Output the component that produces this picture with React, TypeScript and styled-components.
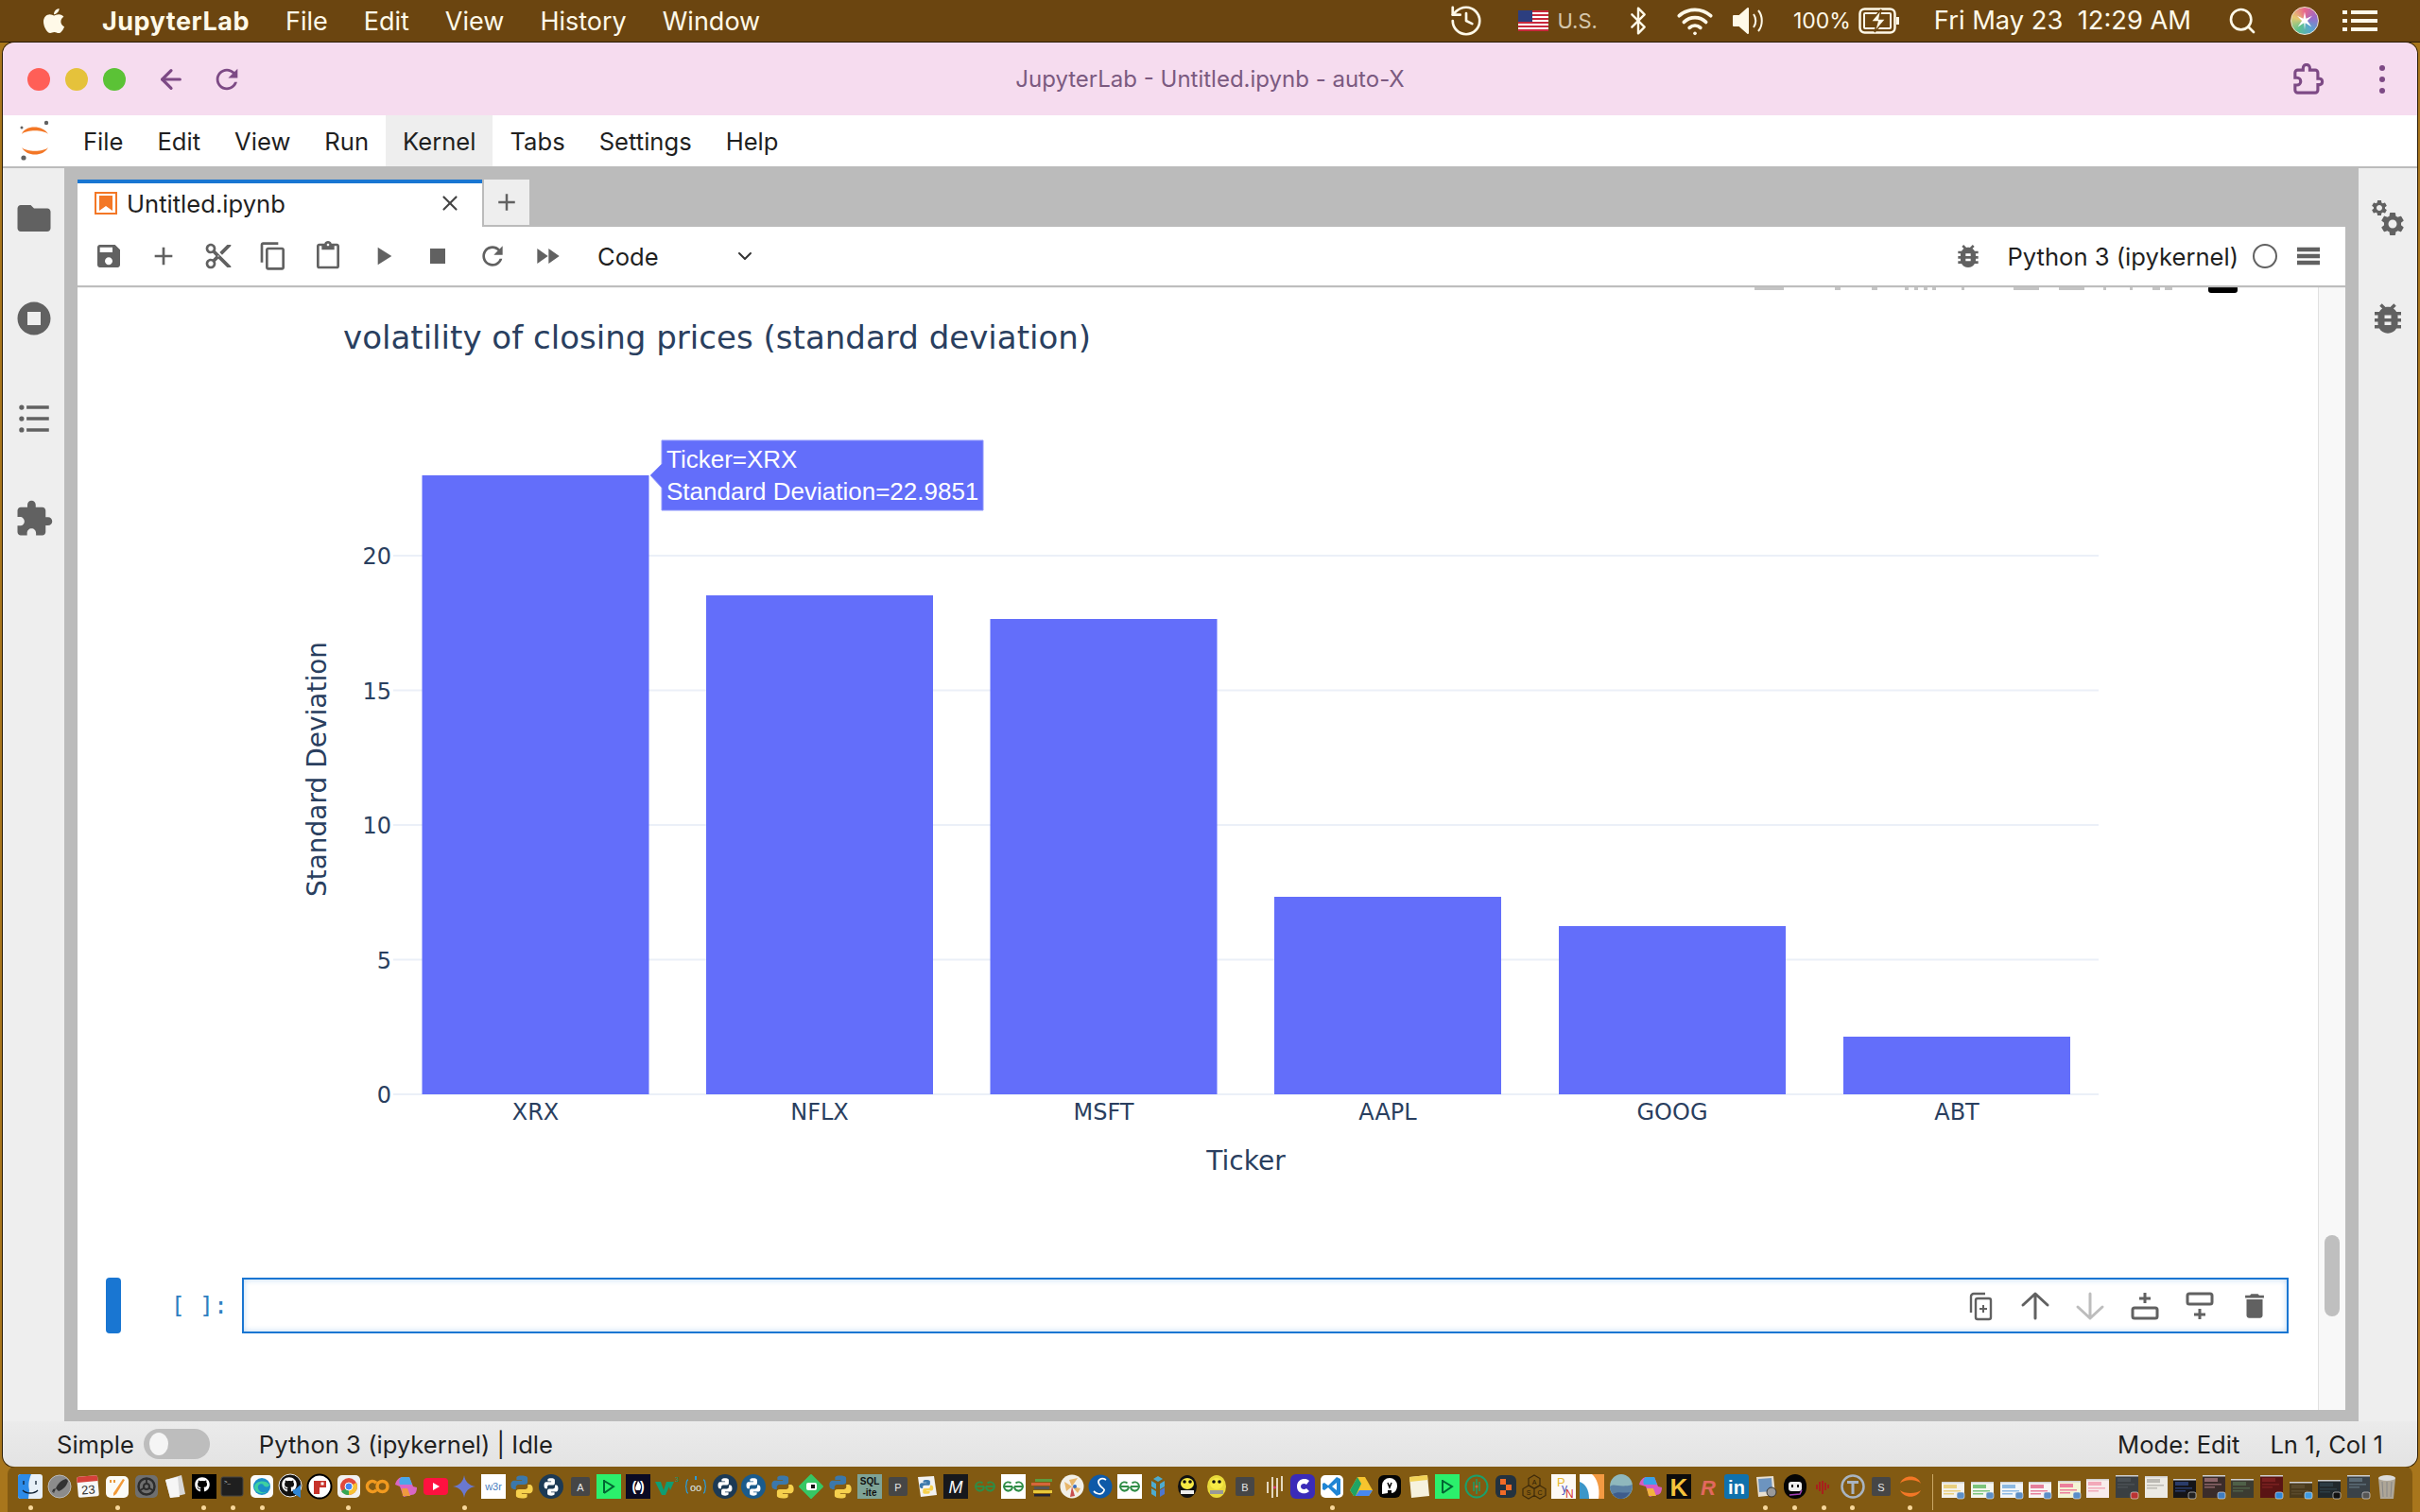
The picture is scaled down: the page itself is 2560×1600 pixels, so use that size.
import React, { ReactNode } from "react";
import styled, { createGlobalStyle } from "styled-components";
import { FaApple, FaGithub } from "react-icons/fa";
import { ArrowLeft, Bluetooth, ChevronDown, History, Search, Wifi, X } from "lucide-react";

const UI_FONT = `Inter, "Liberation Sans", sans-serif`;
const PLOT_FONT = `"DejaVu Sans", Verdana, sans-serif`;
const SANS = `"Liberation Sans", Arial, sans-serif`;

const PATHS = {
  save: "M17 3H5c-1.11 0-2 .9-2 2v14c0 1.1.89 2 2 2h14c1.1 0 2-.9 2-2V7l-4-4zm-5 16c-1.66 0-3-1.34-3-3s1.34-3 3-3 3 1.34 3 3-1.34 3-3 3zm3-10H5V5h10v4z",
  add: "M19 13h-6v6h-2v-6H5v-2h6V5h2v6h6v2z",
  cut: "M9.64 7.64c.23-.5.36-1.05.36-1.64 0-2.21-1.79-4-4-4S2 3.79 2 6s1.79 4 4 4c.59 0 1.14-.13 1.64-.36L10 12l-2.36 2.36C7.14 14.13 6.59 14 6 14c-2.21 0-4 1.79-4 4s1.79 4 4 4 4-1.79 4-4c0-.59-.13-1.14-.36-1.64L12 14l7 7h3v-1L9.64 7.64zM6 8c-1.1 0-2-.89-2-2s.9-2 2-2 2 .89 2 2-.9 2-2 2zm0 12c-1.1 0-2-.89-2-2s.9-2 2-2 2 .89 2 2-.9 2-2 2zm6-7.5c-.28 0-.5-.22-.5-.5s.22-.5.5-.5.5.22.5.5-.22.5-.5.5zM19 3l-6 6 2 2 7-7V3h-3z",
  copy: "M16 1H4c-1.1 0-2 .9-2 2v14h2V3h12V1zm3 4H8c-1.1 0-2 .9-2 2v14c0 1.1.9 2 2 2h11c1.1 0 2-.9 2-2V7c0-1.1-.9-2-2-2zm0 16H8V7h11v14z",
  paste: "M19 2h-4.18C14.4.84 13.3 0 12 0c-1.3 0-2.4.84-2.82 2H5c-1.1 0-2 .9-2 2v16c0 1.1.9 2 2 2h14c1.1 0 2-.9 2-2V4c0-1.1-.9-2-2-2zm-7 0c.55 0 1 .45 1 1s-.45 1-1 1-1-.45-1-1 .45-1 1-1zm7 18H5V4h2v3h10V4h2v16z",
  run: "M8 5v14l11-7z",
  stop: "M6 6h12v12H6z",
  refresh: "M17.65 6.35C16.2 4.9 14.21 4 12 4c-4.42 0-7.99 3.58-7.99 8s3.57 8 7.99 8c3.73 0 6.84-2.55 7.73-6h-2.08c-.82 2.33-3.04 4-5.65 4-3.31 0-6-2.69-6-6s2.69-6 6-6c1.66 0 3.14.69 4.22 1.78L13 11h7V4l-2.35 2.35z",
  forward: "M4 18l8.5-6L4 6v12zm9-12v12l8.5-6L13 6z",
  bug: "M20 8h-2.81c-.45-.78-1.07-1.45-1.82-1.96L17 4.41 15.59 3l-2.17 2.17C12.96 5.06 12.49 5 12 5c-.49 0-.96.06-1.41.17L8.41 3 7 4.41l1.62 1.63C7.88 6.55 7.26 7.22 6.81 8H4v2h2.09c-.05.33-.09.66-.09 1v1H4v2h2v1c0 .34.04.67.09 1H4v2h2.81c1.04 1.79 2.97 3 5.19 3s4.15-1.21 5.19-3H20v-2h-2.09c.05-.33.09-.66.09-1v-1h2v-2h-2v-1c0-.34-.04-.67-.09-1H20V8zm-6 8h-4v-2h4v2zm0-4h-4v-2h4v2z",
  menu: "M3 5h18v3.4H3zM3 10.3h18v3.4H3zM3 15.6h18V19H3z",
  folder: "M10 4H4c-1.1 0-1.99.9-1.99 2L2 18c0 1.1.9 2 2 2h16c1.1 0 2-.9 2-2V8c0-1.1-.9-2-2-2h-8l-2-2z",
  running: "M12 2C6.48 2 2 6.48 2 12s4.48 10 10 10 10-4.48 10-10S17.52 2 12 2zm4 14H8V8h8v8z",
  list: "M3 5.2a1.5 1.5 0 1 1 3 0 1.500 1.500 0 0 1-3 0zM7.5 4.2H21v2H7.5zM3 12a1.5 1.5 0 1 1 3 0 1.500 1.500 0 0 1-3 0zM7.5 11H21v2H7.5zM3 18.800a1.5 1.5 0 1 1 3 0 1.500 1.500 0 0 1-3 0zM7.5 17.800H21v2H7.5z",
  extension: "M20.5 11H19V7c0-1.1-.9-2-2-2h-4V3.5C13 2.12 11.88 1 10.5 1S8 2.12 8 3.5V5H4c-1.1 0-1.99.9-1.99 2v3.8H3.5c1.49 0 2.7 1.21 2.7 2.7s-1.21 2.7-2.7 2.7H2V20c0 1.1.9 2 2 2h3.8v-1.5c0-1.49 1.21-2.7 2.7-2.7 1.49 0 2.7 1.21 2.7 2.7V22H17c1.1 0 2-.9 2-2v-4h1.5c1.38 0 2.5-1.12 2.5-2.5S21.88 11 20.5 11z",
  gear: "M19.14 12.94c.04-.3.06-.61.06-.94 0-.32-.02-.64-.07-.94l2.03-1.58c.18-.14.23-.41.12-.61l-1.92-3.32c-.12-.22-.37-.29-.59-.22l-2.39.96c-.5-.38-1.03-.7-1.62-.94l-.36-2.54c-.04-.24-.24-.41-.48-.41h-3.84c-.24 0-.43.17-.47.41l-.36 2.54c-.59.24-1.13.57-1.62.94l-2.39-.96c-.22-.08-.47 0-.59.22L2.74 8.87c-.12.21-.08.47.12.61l2.03 1.58c-.05.3-.09.63-.09.94s.02.64.07.94l-2.03 1.58c-.18.14-.23.41-.12.61l1.92 3.32c.12.22.37.29.59.22l2.39-.96c.5.38 1.03.7 1.62.94l.36 2.54c.05.24.24.41.48.41h3.84c.24 0 .44-.17.47-.41l.36-2.54c.59-.24 1.13-.56 1.62-.94l2.39.96c.22.08.47 0 .59-.22l1.92-3.32c.12-.22.07-.47-.12-.61l-2.01-1.58zM12 15.6c-1.98 0-3.6-1.62-3.6-3.6s1.62-3.6 3.6-3.6 3.6 1.62 3.6 3.6-1.62 3.6-3.6 3.6z",
  trash: "M6 19c0 1.1.9 2 2 2h8c1.1 0 2-.9 2-2V7H6v12zM19 4h-3.5l-1-1h-5l-1 1H5v2h14V4z",
};

const GlobalStyle = createGlobalStyle`
  html, body { margin: 0; padding: 0; width: 2560px; height: 1600px; overflow: hidden; }
  body { font-family: ${UI_FONT}; }
`;

const Page = styled.div`
  width: 2560px;
  height: 1600px;
  display: flex;
  flex-direction: column;
  background: #a8761c;
`;

/* mac menu bar */
const MacBar = styled.header`
  height: 44px;
  flex: none;
  display: flex;
  align-items: center;
  padding: 0 45px 0 42px;
  background: #6b4510;
  color: #fff9e8;
  font-size: 27px;
  border-bottom: 1px solid #2e1e07;
`;
const MacMenuItem = styled.span<{ $bold?: boolean; $left: number }>`
  margin-left: ${(p) => p.$left}px;
  font-weight: ${(p) => (p.$bold ? 700 : 400)};
  letter-spacing: ${(p) => (p.$bold ? 0.5 : 0)}px;
  line-height: 1;
`;
const MacSlot = styled.span<{ $left?: number; $auto?: boolean; $dim?: boolean; $size?: number }>`
  display: flex;
  align-items: center;
  margin-left: ${(p) => (p.$auto ? "auto" : `${p.$left}px`)};
  opacity: ${(p) => (p.$dim ? 0.72 : 1)};
  font-size: ${(p) => p.$size ?? 27}px;
  line-height: 1;
`;
const SiriDisc = styled.span`
  width: 30px;
  height: 30px;
  box-sizing: border-box;
  border: 1px solid #efe3d2;
  border-radius: 50%;
  display: flex;
  align-items: center;
  justify-content: center;
  background: conic-gradient(#e8668c, #9a6ac8, #58a6cf, #5ec28e, #e6c96f, #e8668c);
`;

/* browser window */
const Window = styled.main`
  flex: none;
  height: 1507px;
  margin: 0 3px;
  display: flex;
  flex-direction: column;
  border-radius: 12px;
  overflow: hidden;
  box-shadow: 0 0 0 1px #2a1c06;
`;
const TitleBar = styled.div`
  height: 77px;
  flex: none;
  display: grid;
  grid-template-columns: 1fr auto 1fr;
  align-items: center;
  background: #f6dcef;
  color: #7d4a85;
`;
const TitleLeft = styled.div`
  display: flex;
  align-items: center;
  padding-left: 26px;
`;
const Traffic = styled.span<{ $color: string }>`
  width: 24px;
  height: 24px;
  border-radius: 50%;
  background: ${(p) => p.$color};
  margin-right: 16px;
`;
const NavButton = styled.span<{ $left: number }>`
  display: flex;
  margin-left: ${(p) => p.$left}px;
`;
const TitleText = styled.div`
  font-size: 24px;
  color: #7b5a80;
`;
const TitleRight = styled.div`
  display: flex;
  align-items: center;
  justify-content: flex-end;
  padding-right: 19px;
  gap: 43px;
`;
const ChromeDots = styled.span`
  display: flex;
  flex-direction: column;
  gap: 6px;
  width: 36px;
  align-items: center;
`;
const ChromeDot = styled.i`
  width: 6px;
  height: 6px;
  border-radius: 50%;
  background: #7d4a85;
`;

const AppMenu = styled.nav`
  height: 54px;
  flex: none;
  display: flex;
  align-items: stretch;
  background: #fff;
  padding-left: 17px;
`;
const LogoBox = styled.div`
  width: 50px;
  display: flex;
  align-items: center;
`;
const AppMenuItem = styled.div<{ $active?: boolean }>`
  display: flex;
  align-items: center;
  padding: 0 18px;
  font-size: 25.6px;
  color: #1f1f1f;
  background: ${(p) => (p.$active ? "#eeeeee" : "transparent")};
`;

const Main = styled.div`
  flex: 1;
  min-height: 0;
  display: flex;
  background: #bbbbbb;
`;
const Rail = styled.aside<{ $width: number }>`
  width: ${(p) => p.$width}px;
  flex: none;
  margin-top: 2px;
  background: #eeeeee;
  display: flex;
  flex-direction: column;
  align-items: center;
  padding-top: 32px;
  gap: 64px;
`;
const Glyph = styled.svg<{ $size: number; $color?: string }>`
  width: ${(p) => p.$size}px;
  height: ${(p) => p.$size}px;
  flex: none;
  display: block;
  fill: ${(p) => p.$color ?? "#616161"};
`;
const GearPair = styled.div`
  width: 42px;
  height: 42px;
  position: relative;
`;
const SmallGear = styled(Glyph)`
  position: absolute;
  top: 0;
  left: 2px;
`;
const BigGear = styled(Glyph)`
  position: absolute;
  right: 1px;
  bottom: 0;
`;

const Center = styled.div`
  flex: 1;
  min-width: 0;
  display: flex;
  flex-direction: column;
  padding: 14px 14px 12px;
`;
const TabBar = styled.div`
  height: 50px;
  flex: none;
  display: flex;
  align-items: flex-start;
`;
const ActiveTab = styled.div`
  width: 428px;
  height: 50px;
  box-sizing: border-box;
  background: #fff;
  border-top: 4px solid #1976d2;
  display: flex;
  align-items: center;
  padding: 0 21px 4px 18px;
  font-size: 25.6px;
  color: #1f1f1f;
`;
const TabLabel = styled.span`
  margin-left: 10px;
  flex: 1;
`;
const NewTab = styled.div`
  width: 48px;
  height: 48px;
  margin-left: 2px;
  background: #eeeeee;
  display: flex;
  align-items: center;
  justify-content: center;
`;

const Toolbar = styled.div`
  height: 62px;
  flex: none;
  position: relative;
  z-index: 1;
  display: flex;
  align-items: center;
  background: #fff;
  padding: 0 23px 0 4px;
  box-shadow: 0 2px 1px #bdbdbd;
`;
const ToolButton = styled.span`
  width: 58px;
  display: flex;
  justify-content: center;
  align-items: center;
`;
const CellType = styled.span`
  width: 144px;
  margin-left: 24px;
  font-size: 25.6px;
  color: #1f1f1f;
`;
const KernelArea = styled.div`
  margin-left: auto;
  display: flex;
  align-items: center;
`;
const KernelName = styled.span`
  font-size: 25.6px;
  color: #1f1f1f;
  margin-left: 25px;
`;
const KernelCircle = styled.span`
  width: 26px;
  height: 26px;
  box-sizing: border-box;
  border: 2px solid #616161;
  border-radius: 50%;
  margin: 0 17px 0 15px;
`;

const Content = styled.section`
  flex: 1;
  min-height: 0;
  display: flex;
  background: #fff;
`;
const NotebookColumn = styled.div`
  flex: 1;
  min-width: 0;
  overflow: hidden;
`;
const PlotSvg = styled.svg`
  display: block;
  width: 2369px;
  height: 1050px;
`;
const CellRow = styled.div`
  display: flex;
  height: 59px;
  padding-left: 30px;
  padding-right: 31px;
`;
const Collapser = styled.div`
  width: 16px;
  border-radius: 4px;
  background: #1976d2;
`;
const Prompt = styled.div`
  width: 113px;
  padding-right: 15px;
  text-align: right;
  font-family: "DejaVu Sans Mono", monospace;
  font-size: 25px;
  line-height: 59px;
  color: #307fc1;
  white-space: pre;
`;
const CellInput = styled.div`
  flex: 1;
  box-sizing: border-box;
  border: 2px solid #1976d2;
  box-shadow: inset 0 0 6px rgba(25, 118, 210, 0.3);
  background: #fff;
  display: flex;
  align-items: center;
  justify-content: flex-end;
  padding-right: 5px;
`;
const Scrollbar = styled.div`
  width: 29px;
  flex: none;
  box-sizing: border-box;
  background: #f8f8f8;
  border-left: 1px solid #e0e0e0;
  padding: 1005px 0 0 6px;
`;
const ScrollThumb = styled.div`
  width: 16px;
  height: 86px;
  background: #bfbfbf;
  border-radius: 8px;
`;

const StatusBar = styled.footer`
  height: 48px;
  flex: none;
  display: flex;
  align-items: center;
  padding: 0 36px 0 57px;
  background: linear-gradient(#ebebeb, #e3e3e3);
  font-size: 25.6px;
  color: #1f1f1f;
`;
const Toggle = styled.span`
  width: 70px;
  height: 32px;
  margin-left: 10px;
  border-radius: 16px;
  background: #bdbdbd;
  display: flex;
  align-items: center;
  padding-left: 6px;
  box-sizing: border-box;
`;
const ToggleKnob = styled.i`
  width: 20px;
  height: 24px;
  border-radius: 50%;
  background: #f5f5f5;
`;
const StatusKernel = styled.span`
  margin-left: 52px;
`;
const StatusRight = styled.span<{ $auto?: boolean }>`
  margin-left: ${(p) => (p.$auto ? "auto" : "32px")};
`;

/* dock */
const Dock = styled.nav`
  flex: 1;
  margin: 0 8px;
  display: flex;
  align-items: flex-start;
  background: #825a12;
  padding: 8px 0 0 9px;
  border-radius: 8px 8px 0 0;
`;
const DockItem = styled.div`
  width: 30.6px;
  flex: none;
  display: flex;
  flex-direction: column;
  align-items: center;
`;
const DockArt = styled.svg`
  width: 26px;
  height: 26px;
  display: block;
  overflow: visible;
`;
const DockDot = styled.i<{ $on?: boolean }>`
  width: 5px;
  height: 5px;
  margin-top: 7px;
  border-radius: 50%;
  background: ${(p) => (p.$on ? "#f7d79a" : "transparent")};
`;
const DockSep = styled.div`
  width: 1px;
  height: 38px;
  margin: 0 6px 0 8px;
  background: #c9a765;
`;

const Icon = ({ d, size = 32, color }: { d: string; size?: number; color?: string }) => (
  <Glyph viewBox="0 0 24 24" $size={size} $color={color}>
    <path d={d} />
  </Glyph>
);

const JupyterLogo = () => (
  <svg width="34" height="44" viewBox="0 0 34 44">
    <path d="M3 15C6 5 26 5 31 15C26 10 8 10 3 15Z" fill="#f37726" />
    <path d="M3 29C8 39 26 39 31 29C26 34 8 34 3 29Z" fill="#f37726" />
    <circle cx="29" cy="3" r="2.2" fill="#616161" />
    <circle cx="3" cy="8" r="1.5" fill="#616161" />
    <circle cx="5" cy="40" r="2.6" fill="#616161" />
  </svg>
);

const NotebookGlyph = () => (
  <svg width="24" height="24" viewBox="0 0 24 24">
    <rect x="1" y="1" width="22" height="22" fill="#fff" stroke="#f37726" strokeWidth="2" />
    <path d="M5 4h14v16l-7-5-7 5z" fill="#f37726" />
  </svg>
);

const CellCopyIcon = () => (
  <svg width="32" height="32" viewBox="0 0 32 32" fill="none" stroke="#616161" strokeWidth="2.4">
    <path d="M21 3H9a3 3 0 0 0-3 3v17" />
    <rect x="11" y="8" width="16" height="22" rx="2" />
    <path d="M19 15v8M15 19h8" strokeWidth="2" />
  </svg>
);

const MoveIcon = ({ down }: { down?: boolean }) => (
  <svg width="32" height="32" viewBox="0 0 32 32" fill="none" stroke={down ? "#bdbdbd" : "#616161"} strokeWidth="3" strokeLinecap="round" strokeLinejoin="round">
    <path d={down ? "M3 17L16 29L29 17M16 29V3" : "M3 15L16 3L29 15M16 3V29"} />
  </svg>
);

const InsertIcon = ({ below }: { below?: boolean }) => (
  <svg width="32" height="32" viewBox="0 0 32 32" fill="none" stroke="#616161" strokeWidth="3">
    {below ? (
      <>
        <rect x="3" y="3" width="26" height="11" rx="2" />
        <path d="M16 19v11M10 25h12" />
      </>
    ) : (
      <>
        <rect x="3" y="18" width="26" height="11" rx="2" />
        <path d="M16 2v11M10 8h12" />
      </>
    )}
  </svg>
);

const FlagIcon = () => (
  <svg width="32" height="22" viewBox="0 0 32 22">
    <rect width="32" height="22" fill="#fff" />
    {[0, 4, 8, 12, 16, 20].map((y) => (
      <rect key={y} y={y} width="32" height="2" fill="#c8283c" />
    ))}
    <rect width="15" height="12" fill="#2c3e7f" />
  </svg>
);

const VolumeIcon = () => (
  <svg width="36" height="32" viewBox="0 0 36 32" fill="none" stroke="#fff9e8" strokeWidth="2">
    <path d="M2 11h6l9-8v26l-9-8H2z" fill="#fff9e8" strokeLinejoin="round" />
    <path d="M23 9c3 4 3 10 0 14M28 5c5 6 5 16 0 22" />
  </svg>
);

const BatteryIcon = () => (
  <svg width="44" height="30" viewBox="0 0 44 30" fill="none" stroke="#fff9e8" strokeWidth="2.5">
    <rect x="1.5" y="2.5" width="37" height="25" rx="5" />
    <rect x="6" y="7" width="28" height="16" rx="1" strokeWidth="2" />
    <path d="M41.5 11v8" strokeWidth="3" />
    <path d="M24 3l-11 13h7l-3 11 12-14h-7z" fill="#fff9e8" stroke="#6b4510" strokeWidth="1.5" />
  </svg>
);

const MacListIcon = () => (
  <svg width="37" height="22" viewBox="0 0 37 22" fill="#fff9e8">
    {[0, 9, 18].map((y) => (
      <g key={y}>
        <rect y={y} width="5" height="4" />
        <rect x="9" y={y} width="28" height="4" />
      </g>
    ))}
  </svg>
);

const TICK_COLOR = "#2a3f5f";
const BARS = [
  { name: "XRX", x: 446.5, top: 503 },
  { name: "NFLX", x: 747, top: 630 },
  { name: "MSFT", x: 1047.5, top: 655 },
  { name: "AAPL", x: 1348, top: 949 },
  { name: "GOOG", x: 1649, top: 980 },
  { name: "ABT", x: 1950, top: 1097 },
];
const Y_TICKS = [
  { label: "0", y: 1158 },
  { label: "5", y: 1015.5 },
  { label: "10", y: 873 },
  { label: "15", y: 730.5 },
  { label: "20", y: 588 },
];
const MODEBAR: [number, number][] = [
  [1856, 31], [1941, 6], [1980, 6], [2015, 4], [2025, 4], [2035, 4], [2044, 4], [2075, 3],
  [2130, 27], [2178, 27], [2225, 3], [2253, 3], [2277, 8], [2290, 8],
];

const Plot = () => (
  <PlotSvg viewBox="82 302 2369 1050">
    {MODEBAR.map(([x, w]) => (
      <rect key={x} x={x} y="302" width={w} height="5" fill="#c4c4c4" />
    ))}
    <rect x="2336" y="302" width="31" height="8" rx="3" fill="#000" />
    <text x="363" y="369" fontFamily={PLOT_FONT} fontSize="34.05" fill={TICK_COLOR}>
      volatility of closing prices (standard deviation)
    </text>
    {Y_TICKS.map((t) => (
      <g key={t.label}>
        <rect x="416" y={t.y - 1} width="1804" height="2" fill="#ebf0f8" />
        <text x="414" y={t.y + 9} textAnchor="end" fontFamily={PLOT_FONT} fontSize="24" fill={TICK_COLOR}>
          {t.label}
        </text>
      </g>
    ))}
    {BARS.map((b) => (
      <g key={b.name}>
        <rect x={b.x} y={b.top} width="240" height={1158 - b.top} fill="#636efa" />
        <text x={b.x + 120} y="1185" textAnchor="middle" fontFamily={PLOT_FONT} fontSize="24" fill={TICK_COLOR}>
          {b.name}
        </text>
      </g>
    ))}
    <text x="1318" y="1238" textAnchor="middle" fontFamily={PLOT_FONT} fontSize="28" fill={TICK_COLOR}>
      Ticker
    </text>
    <text
      transform="translate(345 814) rotate(-90)"
      textAnchor="middle"
      fontFamily={PLOT_FONT}
      fontSize="28"
      fill={TICK_COLOR}
    >
      Standard Deviation
    </text>
    <path d="M700 466H1040V540H700V516L688 503L700 491Z" fill="#636efa" stroke="#8f97fb" strokeWidth="1" />
    <text x="705" y="495" fontFamily={SANS} fontSize="26" fill="#fff">
      Ticker=XRX
    </text>
    <text x="705" y="529" fontFamily={SANS} fontSize="26" fill="#fff">
      Standard Deviation=22.9851
    </text>
  </PlotSvg>
);

/* small drawings for the dock */
const Tile = ({ bg, text, color = "#fff", size = 12, rx = 0, bold, y = 17 }: {
  bg: string; text?: string; color?: string; size?: number; rx?: number; bold?: boolean; y?: number;
}) => (
  <>
    <rect width="26" height="26" rx={rx} fill={bg} />
    {text && (
      <text x="13" y={y} textAnchor="middle" fontFamily={SANS} fontSize={size} fontWeight={bold ? 700 : 400} fill={color}>
        {text}
      </text>
    )}
  </>
);

const SNAKE = "M12.8 1.5C8 1.5 8.3 3.6 8.3 3.6V6h4.8v.8H6.5S3.3 6.4 3.3 11.3s2.8 4.7 2.8 4.7h1.700v-2.300s-.1-2.800 2.800-2.800h4.800s2.700 0 2.700-2.600V4.200s.4-2.700-5.300-2.700z";
const Python = () => (
  <g transform="translate(-2.6 0) scale(1.2 1)">
    <path d={SNAKE} fill="#3b78ab" />
    <g transform="rotate(180 13 13.5)"><path d={SNAKE} fill="#f6d04d" /></g>
  </g>
);
const PythonBadge = ({ bg }: { bg: string }) => (
  <>
    <circle cx="13" cy="13" r="13" fill={bg} />
    <g transform="translate(3 3) scale(.77)">
      <path d={SNAKE} fill="#fff" />
      <g transform="rotate(180 13 13.5)"><path d={SNAKE} fill="#fff" /></g>
    </g>
  </>
);
const GeeksMark = () => (
  <path
    d="M3 11h9M14 11h9M12 11a4.5 4.5 0 1 1-1.5-3.500M14 11a4.5 4.5 0 1 0 1.5-3.500M12 11a4.5 4.5 0 0 1-8 3M14 11a4.5 4.5 0 0 0 8 3"
    transform="translate(0 2)"
    fill="none"
    stroke="#2f8d46"
    strokeWidth="1.8"
  />
);
const DkMark = () => (
  <>
    <rect width="26" height="26" fill="#2bf06c" />
    <path d="M8 6v14M8 7l10 6-10 7" fill="none" stroke="#063" strokeWidth="2" />
  </>
);
const SquareLetter = ({ letter }: { letter: string }) => (
  <>
    <rect x="3" y="3" width="20" height="20" rx="2" fill="#464646" />
    <text x="13" y="18" textAnchor="middle" fontFamily={SANS} fontSize="11" fill="#e8e8e8">{letter}</text>
  </>
);
const Turtle = ({ dark }: { dark?: boolean }) => (
  <>
    <ellipse cx="13" cy="13" rx="10" ry="12" fill={dark ? "#111" : "#e8d93a"} />
    <ellipse cx="13" cy="10" rx="7" ry="6" fill="#f7ea45" />
    <circle cx="10" cy="8" r="1.8" fill="#111" />
    <circle cx="16" cy="8" r="1.8" fill="#111" />
    <rect x="6" y="17" width="14" height="4" fill={dark ? "#eee" : "#999"} />
  </>
);

const DOCK_ITEMS: { art: ReactNode; dot?: boolean }[] = [
  { dot: true, art: <>
    <rect width="26" height="26" rx="3" fill="#e8f0f8" />
    <path d="M0 3a3 3 0 0 1 3-3h11c-3 7-3 12-2 17l-1 9H3a3 3 0 0 1-3-3z" fill="#2d8be8" />
    <path d="M6 7v4M19 7v4M5 17c4 4 12 4 16 0" stroke="#123" strokeWidth="1.3" fill="none" />
  </> },
  { art: <>
    <circle cx="13" cy="13" r="12" fill="#8c8c8c" stroke="#bbb" />
    <path d="M20 5c-5 1-9 5-11 10l3 3c5-2 9-6 10-11zM9 15l-3 1-1 3 3-1zM6 20l2-1-1-1z" fill="#333" />
  </> },
  { art: <>
    <g transform="rotate(-5 13 13)">
      <rect x="2" y="2" width="22" height="22" rx="2" fill="#f7f7f7" />
      <path d="M2 8V4a2 2 0 0 1 2-2h18a2 2 0 0 1 2 2v4z" fill="#d5403a" />
      <text x="13" y="21" textAnchor="middle" fontFamily={SANS} fontSize="13" fill="#333">23</text>
    </g>
  </> },
  { dot: true, art: <>
    <rect x="1" y="2" width="24" height="23" rx="5" fill="#fbfbf6" />
    <path d="M19 5l2 1-9 15-3 2 0-3z" fill="#f29a38" />
    <path d="M5 6h2v3H5zM9 6h2v3H9z" fill="#e8983a" />
  </> },
  { art: <>
    <rect x="1" y="1" width="24" height="24" rx="5" fill="#6f6f6f" />
    <circle cx="13" cy="13" r="8.5" fill="none" stroke="#2c2c2c" strokeWidth="2.5" />
    <circle cx="13" cy="13" r="3" fill="none" stroke="#2c2c2c" strokeWidth="2" />
    <path d="M13 4.5V10M5.5 17.5l5-3M20.5 17.5l-5-3" stroke="#2c2c2c" strokeWidth="1.8" />
  </> },
  { art: <>
    <path d="M3 6l17-5 4 20-16 4z" fill="#d8d8d8" />
    <path d="M3 6l13-3 2 21-10 1z" fill="#f6f6f6" />
  </> },
  { dot: true, art: <>
    <rect width="26" height="26" fill="#000" />
    <FaGithub x="3" y="3" width="20" height="20" color="#fff" />
  </> },
  { dot: true, art: <>
    <rect x="1" y="3" width="23" height="20" rx="2" fill="#1f1f1f" stroke="#444" />
    <text x="4" y="10" fontFamily={SANS} fontSize="6" fill="#ddd">&gt;_</text>
  </> },
  { dot: true, art: <>
    <rect x="1" y="1" width="24" height="24" rx="5" fill="#fbfbfb" />
    <circle cx="13" cy="13" r="9" fill="#1b8fc8" />
    <path d="M5 13c1-6 12-8 16-2 0 3-5 3-6 1-1-3-7-2-6 3 1 4 6 6 10 3-3 4-14 3-14-5z" fill="#3ed0a0" />
  </> },
  { art: <>
    <circle cx="12" cy="12" r="12" fill="#111" stroke="#eee" />
    <FaGithub x="3" y="3" width="18" height="18" color="#fff" />
    <path d="M15 18l8-7v14l-8-5zM16 19l-2-2 2-1z" fill="#2f86d6" />
  </> },
  { art: <>
    <circle cx="13" cy="13" r="12.5" fill="#fff" stroke="#000" strokeWidth="2" />
    <path d="M7 7h13v7h-7v7H7z" fill="#c7332b" />
    <rect x="14.5" y="8.5" width="3" height="3" fill="#fff" />
  </> },
  { dot: true, art: <>
    <rect x="1" y="1" width="24" height="24" rx="5" fill="#f1f1f1" />
    <circle cx="13" cy="13" r="9" fill="#e14a3c" />
    <path d="M13 13L5 18a9 9 0 0 0 8 4z" fill="#35a853" />
    <path d="M13 13l8-4a9 9 0 0 1-8 13z" fill="#f7c234" />
    <circle cx="13" cy="13" r="4" fill="#4285f4" stroke="#fff" />
  </> },
  { art: <>
    <circle cx="8" cy="13" r="5.5" fill="none" stroke="#f29a1f" strokeWidth="3.5" strokeDasharray="26 8" transform="rotate(40 8 13)" />
    <circle cx="18.5" cy="13" r="5.5" fill="none" stroke="#f29a1f" strokeWidth="3.5" />
  </> },
  { art: <>
    <path d="M8 3h8l4 10 4 1c0 5-2 8-6 8l-8 2-4-11L1 11C2 7 4 4 8 3z" fill="#d966c4" />
    <path d="M8 3h8l3 8H6C5 8 5 5 8 3z" fill="#4aa6e8" />
    <path d="M8 15h6l3 8H9z" fill="#ef9a3e" />
  </> },
  { art: <>
    <rect x="0" y="4" width="26" height="18" rx="4" fill="#ff1140" />
    <path d="M10 9l7 4-7 4z" fill="#fff" />
  </> },
  { dot: true, art: <path d="M13 1c1 7 5 11 12 12-7 1-11 5-12 12-1-7-5-11-12-12 7-1 11-5 12-12z" fill="#6a78cf" /> },
  { art: <Tile bg="#fff" text="w3r" color="#4a7fc0" size={11} /> },
  { art: <Python /> },
  { art: <PythonBadge bg="#1c3a55" /> },
  { art: <SquareLetter letter="A" /> },
  { art: <DkMark /> },
  { art: <>
    <rect width="26" height="26" fill="#0a0a23" />
    <text x="13" y="18" textAnchor="middle" fontFamily={SANS} fontSize="14" fontWeight="700" fill="#fff">( )</text>
    <path d="M13 7c3 4 4 6 2 10h-4c-2-3 0-4 2-10z" fill="#fff" />
  </> },
  { art: <>
    <path d="M1 8h6l3 9 3-9h5l-6 14h-4zM14 8h7l-4 9z" fill="#0f9d72" />
    <text x="22" y="8" fontFamily={SANS} fontSize="7" fill="#0f9d72">3</text>
  </> },
  { art: <>
    <text x="13" y="18" textAnchor="middle" fontFamily={SANS} fontSize="11" fill="#dfeaf0">oo</text>
    <path d="M5 6c-3 0-1 7-3 7 2 0 0 7 3 7M21 6c3 0 1 7 3 7-2 0 0 7-3 7" fill="none" stroke="#2a9bd8" strokeWidth="1.3" />
    <rect x="12" y="2" width="2" height="4" fill="#2a9bd8" />
  </> },
  { art: <PythonBadge bg="#1c3a55" /> },
  { art: <PythonBadge bg="#1a5b8c" /> },
  { art: <Python /> },
  { art: <>
    <path d="M13 1l12 12-12 12L1 13z" fill="#36c765" stroke="#36c765" strokeWidth="2" strokeLinejoin="round" />
    <rect x="8" y="9" width="11" height="8" rx="2" fill="#fff" />
    <rect x="13" y="11" width="4" height="4" fill="#111" />
  </> },
  { art: <Python /> },
  { art: <>
    <rect width="26" height="26" fill="#7ea396" />
    <text x="13" y="11" textAnchor="middle" fontFamily={SANS} fontSize="10" fontWeight="700" fill="#111">SQL</text>
    <text x="13" y="23" textAnchor="middle" fontFamily={SANS} fontSize="10" fontWeight="700" fill="#111">-ite</text>
  </> },
  { art: <SquareLetter letter="P" /> },
  { art: <>
    <path d="M3 3l17-1 3 20-17 2z" fill="#f2f2f2" />
    <g transform="translate(4 5) scale(.62)"><Python /></g>
  </> },
  { art: <>
    <rect width="26" height="26" fill="#17181c" />
    <text x="13" y="20" textAnchor="middle" fontFamily={SANS} fontSize="18" fontStyle="italic" fill="#fff">M</text>
  </> },
  { art: <GeeksMark /> },
  { art: <><rect width="26" height="26" fill="#fff" /><GeeksMark /></> },
  { art: <>
    <rect x="5" y="5" width="18" height="3" fill="#5d9c3f" />
    <rect x="1" y="9" width="20" height="3" fill="#d5653a" />
    <rect x="4" y="13" width="16" height="3" fill="#555" />
    <rect x="3" y="17" width="20" height="3" fill="#e8c83a" />
    <rect x="4" y="21" width="17" height="2.5" fill="#223" />
  </> },
  { art: <>
    <circle cx="13" cy="13" r="12.5" fill="#f2f0e8" />
    <path d="M13 13L5 8l2 10zM13 13l6-9-9 2zM13 13l9 2-3 5z" fill="#e8b66a" />
    <path d="M13 13l-2 11 5-1z" fill="#c94f4f" />
    <circle cx="16" cy="13" r="2" fill="#3a6fc0" />
  </> },
  { art: <>
    <circle cx="13" cy="13" r="12.5" fill="#0e5aa8" />
    <path d="M19 6c-5-3-10 0-7 5s8 4 3 9c-3 2-7 0-9-2" fill="none" stroke="#fff" strokeWidth="1.8" />
  </> },
  { art: <><rect width="26" height="26" fill="#fff" /><GeeksMark /></> },
  { art: <>
    <path d="M13 2l5 3-5 3-5-3zM6 7l5 3v6l-5-3zM20 7l-5 3v6l5-3zM6 15l5 3v6l-5-3z" fill="#4dabcf" />
    <path d="M15 17l5-3v7l-5 3z" fill="#4d77cf" />
  </> },
  { art: <Turtle dark /> },
  { art: <Turtle /> },
  { art: <SquareLetter letter="B" /> },
  { art: <>
    <path d="M6 8v12M11 3v22M16 4v20M21 2v16" stroke="#efe6d2" strokeWidth="1.8" />
    <circle cx="13.5" cy="14" r="1.5" fill="#e23c7c" />
  </> },
  { art: <>
    <rect x="0" y="0" width="26" height="26" rx="6" fill="#3a2bb8" />
    <path d="M20 7c-4-4-13-2-13 6s9 9 13 5l-3-3c-2 2-6 1-6-2s4-4 6-2z" fill="#fff" />
  </> },
  { dot: true, art: <>
    <rect x="1" y="1" width="24" height="24" rx="5" fill="#fff" />
    <path d="M18 3l4 2v16l-4 2-9-9-4 3-2-1v-6l2-1 4 3zM18 9l-5 4 5 4z" fill="#1f85d4" />
  </> },
  { art: <>
    <path d="M9 3h8l8 14-4 6H5l-4-6z" fill="#f7c42e" />
    <path d="M1 17l8-14 4 7-6 13H5z" fill="#1fa463" />
    <path d="M7 23l4-6h14l-4 6z" fill="#4688f1" />
  </> },
  { art: <>
    <rect x="1" y="1" width="24" height="24" rx="6" fill="#050505" />
    <path d="M5 21V12a8 8 0 0 1 16 0c0 5-3 8-6 8v-3h-4v3z" fill="#fff" />
    <path d="M11 9l2 5 2-5" stroke="#000" strokeWidth="1.5" fill="none" />
  </> },
  { art: <>
    <path d="M3 3l19-2 2 22-19 2z" fill="#f6f2de" />
    <path d="M3 3l19-2 .4 5-19 2z" fill="#f2d358" />
  </> },
  { art: <DkMark /> },
  { art: <>
    <circle cx="13" cy="13" r="11.5" fill="none" stroke="#1aa06b" strokeWidth="2" />
    <path d="M10 8v10M13 5v16M16 8v10" stroke="#1aa06b" strokeWidth="1.5" />
    <circle cx="13" cy="13" r="1.5" fill="#d5653a" />
  </> },
  { art: <>
    <rect x="2" y="1" width="22" height="24" rx="6" fill="#23323f" />
    <rect x="7" y="5" width="6" height="6" fill="#f26b27" />
    <rect x="13" y="11" width="6" height="6" fill="#f26b27" />
    <rect x="7" y="17" width="6" height="5" fill="#f26b27" />
  </> },
  { art: <>
    <path d="M13 1l6 3.5v7L13 15l-6-3.5v-7zM7 12l6 3.5v7L7 26l-6-3.5v-7zM19 12l6 3.5v7L19 26l-6-3.5v-7z" fill="none" stroke="#3d2a0a" strokeWidth="1.2" />
    <text x="13" y="11" textAnchor="middle" fontFamily={SANS} fontSize="7" fill="#2a1c06">A</text>
    <text x="7" y="22" textAnchor="middle" fontFamily={SANS} fontSize="7" fill="#2a1c06">S</text>
    <text x="19" y="22" textAnchor="middle" fontFamily={SANS} fontSize="7" fill="#2a1c06">C</text>
  </> },
  { art: <>
    <rect width="26" height="26" fill="#fdfaf5" />
    <text x="6" y="13" fontFamily={SANS} fontSize="13" fill="#e8b92e">P</text>
    <text x="11" y="19" fontFamily={SANS} fontSize="12" fill="#4a55c0">y</text>
    <text x="15" y="25" fontFamily={SANS} fontSize="12" fill="#d5312e">N</text>
  </> },
  { art: <>
    <rect width="26" height="26" fill="#fff" />
    <path d="M13 0h13v26h-6C22 14 18 4 13 0z" fill="#f39a42" />
    <path d="M0 26V8c6 2 10 8 10 18z" fill="#3c96c8" />
  </> },
  { art: <>
    <ellipse cx="13" cy="13" rx="12" ry="13" fill="#8fb8bd" />
    <path d="M1 13c5-4 10 2 24-2 0 10-6 15-12 15S1 20 1 13z" fill="#5a80a3" />
    <path d="M4 21c6-4 12 0 18-2-2 4-6 7-9 7s-7-2-9-5z" fill="#3e5c8c" />
  </> },
  { art: <>
    <path d="M8 3h9l4 10 4 1c0 5-2 8-6 8l-7 2-4-11-7-2C2 7 4 4 8 3z" fill="#d45bc3" />
    <path d="M8 3h9l3 8H6C5 8 5 5 8 3z" fill="#3aa1e8" />
    <path d="M9 15h7l3 8H11z" fill="#f2b33e" />
  </> },
  { art: <>
    <rect width="26" height="26" fill="#0c0c0c" />
    <text x="13" y="23" textAnchor="middle" fontFamily={SANS} fontSize="26" fontWeight="700" fill="#f5c33b">K</text>
  </> },
  { art: <text x="13" y="22" textAnchor="middle" fontFamily={SANS} fontSize="22" fontWeight="700" fontStyle="italic" fill="#e2685f">R</text> },
  { art: <Tile bg="#0f71ac" text="in" size={20} bold rx={3} y={21} /> },
  { dot: true, art: <>
    <path d="M3 3l18-1 2 20-18 2z" fill="#e8dfd0" />
    <path d="M5 5l14-1 1 14-14 1z" fill="#6d94bf" />
    <circle cx="19" cy="19" r="5" fill="#999" stroke="#333" />
  </> },
  { dot: true, art: <>
    <rect x="1" y="0" width="24" height="26" rx="12" fill="#050505" />
    <rect x="6" y="8" width="14" height="10" rx="3" fill="#eee" />
    <rect x="9" y="11" width="2" height="3" fill="#111" />
    <rect x="15" y="11" width="2" height="3" fill="#111" />
    <path d="M7 22l11-1 2-4" stroke="#a33fb8" strokeWidth="1.5" fill="none" />
  </> },
  { dot: true, art: <path d="M6 11v5M9 8v10M12 7v14M15 9v8M18 11v4" stroke="#a8201c" strokeWidth="2" /> },
  { dot: true, art: <>
    <circle cx="13" cy="13" r="11.5" fill="none" stroke="#a8b4c2" strokeWidth="2.5" />
    <path d="M7 7h12v3h-4.5v11h-3V10H7z" fill="#a8b4c2" />
  </> },
  { art: <SquareLetter letter="S" /> },
  { dot: true, art: <>
    <path d="M2 10C5 0 21 0 24 10C20 5 6 5 2 10Z" fill="#f37726" />
    <path d="M2 17C6 26 20 26 24 17C20 21 6 21 2 17Z" fill="#f37726" />
  </> },
];

type ThumbSpec = { bg: string; band: string; top: number; badge?: string };

/* window previews in the dock: the notebooks are low and wide, the editors taller */
const THUMBS: ThumbSpec[] = [
  { bg: "#f4f2ec", band: "#e9cf7e", top: 8, badge: "#5c8fc8" },
  { bg: "#f4f6f0", band: "#7cc47c", top: 8, badge: "#5c8fc8" },
  { bg: "#f2f5f8", band: "#8db9e2", top: 8, badge: "#5c8fc8" },
  { bg: "#f8f4f4", band: "#e57f9b", top: 8, badge: "#5c8fc8" },
  { bg: "#f4f4d4", band: "#ec7f9c", top: 7, badge: "#5c8fc8" },
  { bg: "#f8ecec", band: "#f2a9b9", top: 5 },
  { bg: "#3a3f42", band: "#4a5054", top: 1, badge: "#b33" },
  { bg: "#eceae4", band: "#bcbab4", top: 2 },
  { bg: "#141418", band: "#2a3c6a", top: 5, badge: "#222" },
  { bg: "#3a2c2a", band: "#8a6468", top: 1, badge: "#3f7cc0" },
  { bg: "#3c3c32", band: "#4f6048", top: 5 },
  { bg: "#5a1414", band: "#7a2020", top: 1, badge: "#2f86d6" },
  { bg: "#4a3a1c", band: "#5a4a2c", top: 8, badge: "#3f9ae0" },
  { bg: "#20282c", band: "#2c3c44", top: 6, badge: "#111" },
  { bg: "#3a4248", band: "#5a6a74", top: 1, badge: "#555" },
];

const Thumb = ({ bg, band, top, badge }: ThumbSpec) => (
  <DockArt viewBox="0 0 26 26">
    <rect x="1" y={top} width="24" height={25 - top} fill={bg} />
    <rect x="1" y={top} width="24" height="1.5" fill="#cfcfcf" />
    <rect x="3" y={top + 3} width="14" height="4" fill={band} />
    <rect x="3" y={top + 9} width="18" height="1.5" fill={band} />
    <rect x="3" y={top + 12} width="11" height="1.5" fill={band} />
    {badge && <rect x="17" y="19" width="8" height="7" rx="2" fill={badge} stroke="#eee" strokeWidth=".6" />}
  </DockArt>
);

const MENU = ["File", "Edit", "View", "Run", "Kernel", "Tabs", "Settings", "Help"];
const TOOLS = [PATHS.save, PATHS.add, PATHS.cut, PATHS.copy, PATHS.paste, PATHS.run, PATHS.stop, PATHS.refresh, PATHS.forward];

export default function App() {
  return (
    <Page>
      <GlobalStyle />
      <MacBar>
        <FaApple size={30} color="#fff9e8" />
        <MacMenuItem $bold $left={36}>JupyterLab</MacMenuItem>
        <MacMenuItem $left={38}>File</MacMenuItem>
        <MacMenuItem $left={38}>Edit</MacMenuItem>
        <MacMenuItem $left={38}>View</MacMenuItem>
        <MacMenuItem $left={38}>History</MacMenuItem>
        <MacMenuItem $left={38}>Window</MacMenuItem>
        <MacSlot $auto><History size={38} strokeWidth={1.7} /></MacSlot>
        <MacSlot $left={36}><FlagIcon /></MacSlot>
        <MacSlot $left={9} $dim $size={22}>U.S.</MacSlot>
        <MacSlot $left={27}><Bluetooth size={32} strokeWidth={1.8} /></MacSlot>
        <MacSlot $left={24}><Wifi size={40} strokeWidth={2.2} /></MacSlot>
        <MacSlot $left={19}><VolumeIcon /></MacSlot>
        <MacSlot $left={29} $size={23}>100%</MacSlot>
        <MacSlot $left={8}><BatteryIcon /></MacSlot>
        <MacSlot $left={36} $size={27.3}>Fri May 23&nbsp; 12:29 AM</MacSlot>
        <MacSlot $left={38}><Search size={32} strokeWidth={2} /></MacSlot>
        <MacSlot $left={35}>
          <SiriDisc>
            <svg width="22" height="22" viewBox="0 0 30 30">
              <path d="M15 2l2 10 9-4-7 7 6 9-9-6-1 10-1-10-9 6 6-9-7-7 9 4z" fill="#fff" />
            </svg>
          </SiriDisc>
        </MacSlot>
        <MacSlot $left={25}><MacListIcon /></MacSlot>
      </MacBar>

      <Window>
        <TitleBar>
          <TitleLeft>
            <Traffic $color="#ff5f57" />
            <Traffic $color="#e5c23b" />
            <Traffic $color="#5bc236" />
            <NavButton $left={16}><ArrowLeft size={32} color="#7d4a85" strokeWidth={2.4} /></NavButton>
            <NavButton $left={26}><Icon d={PATHS.refresh} size={34} color="#7d4a85" /></NavButton>
          </TitleLeft>
          <TitleText>JupyterLab - Untitled.ipynb - auto-X</TitleText>
          <TitleRight>
            <svg width="34" height="34" viewBox="0 0 24 24" fill="none" stroke="#7d4a85" strokeWidth="2.2">
              <path d="M20.5 11.5H19V7c0-1.1-.9-2-2-2h-4V3.5a2.5 2.5 0 0 0-5 0V5H4c-1.1 0-2 .9-2 2v3.8h1.5a2.7 2.7 0 0 1 0 5.4H2V20c0 1.1.9 2 2 2h13c1.1 0 2-.9 2-2v-4h1.5a2.3 2.3 0 0 0 0-4.500z" />
            </svg>
            <ChromeDots>
              <ChromeDot />
              <ChromeDot />
              <ChromeDot />
            </ChromeDots>
          </TitleRight>
        </TitleBar>

        <AppMenu>
          <LogoBox><JupyterLogo /></LogoBox>
          {MENU.map((m) => (
            <AppMenuItem key={m} $active={m === "Kernel"}>{m}</AppMenuItem>
          ))}
        </AppMenu>

        <Main>
          <Rail $width={65}>
            <Icon d={PATHS.folder} size={42} />
            <Icon d={PATHS.running} size={42} />
            <Icon d={PATHS.list} size={42} />
            <Icon d={PATHS.extension} size={42} />
          </Rail>
          <Center>
            <TabBar>
              <ActiveTab>
                <NotebookGlyph />
                <TabLabel>Untitled.ipynb</TabLabel>
                <X size={26} color="#444" strokeWidth={2} />
              </ActiveTab>
              <NewTab><Icon d={PATHS.add} size={30} /></NewTab>
            </TabBar>
            <Toolbar>
              {TOOLS.map((d) => (
                <ToolButton key={d}><Icon d={d} /></ToolButton>
              ))}
              <CellType>Code</CellType>
              <ChevronDown size={24} color="#333" strokeWidth={2} />
              <KernelArea>
                <Icon d={PATHS.bug} />
                <KernelName>Python 3 (ipykernel)</KernelName>
                <KernelCircle />
                <Icon d={PATHS.menu} />
              </KernelArea>
            </Toolbar>
            <Content>
              <NotebookColumn>
                <Plot />
                <CellRow>
                  <Collapser />
                  <Prompt>[ ]:</Prompt>
                  <CellInput>
                    <ToolButton><CellCopyIcon /></ToolButton>
                    <ToolButton><MoveIcon /></ToolButton>
                    <ToolButton><MoveIcon down /></ToolButton>
                    <ToolButton><InsertIcon /></ToolButton>
                    <ToolButton><InsertIcon below /></ToolButton>
                    <ToolButton><Icon d={PATHS.trash} size={34} /></ToolButton>
                  </CellInput>
                </CellRow>
              </NotebookColumn>
              <Scrollbar><ScrollThumb /></Scrollbar>
            </Content>
          </Center>
          <Rail $width={62}>
            <GearPair>
              <SmallGear viewBox="0 0 24 24" $size={20}><path d={PATHS.gear} /></SmallGear>
              <BigGear viewBox="0 0 24 24" $size={30}><path d={PATHS.gear} /></BigGear>
            </GearPair>
            <Icon d={PATHS.bug} size={42} />
          </Rail>
        </Main>

        <StatusBar>
          Simple
          <Toggle><ToggleKnob /></Toggle>
          <StatusKernel>Python 3 (ipykernel) | Idle</StatusKernel>
          <StatusRight $auto>Mode: Edit</StatusRight>
          <StatusRight>Ln 1, Col 1</StatusRight>
        </StatusBar>
      </Window>

      <Dock>
        {DOCK_ITEMS.map((item, i) => (
          <DockItem key={i}>
            <DockArt viewBox="0 0 26 26">{item.art}</DockArt>
            <DockDot $on={item.dot} />
          </DockItem>
        ))}
        <DockSep />
        {THUMBS.map((t, i) => (
          <DockItem key={i}>
            <Thumb {...t} />
          </DockItem>
        ))}
        <DockItem>
          <DockArt viewBox="0 0 26 26">
            <path d="M4 4h18l-2 22H6z" fill="#b9b9b9" opacity=".8" />
            <ellipse cx="13" cy="4" rx="9" ry="3" fill="#dcdcdc" />
            <path d="M8 8l1 16M13 8v16M18 8l-1 16" stroke="#888" />
          </DockArt>
        </DockItem>
      </Dock>
    </Page>
  );
}
